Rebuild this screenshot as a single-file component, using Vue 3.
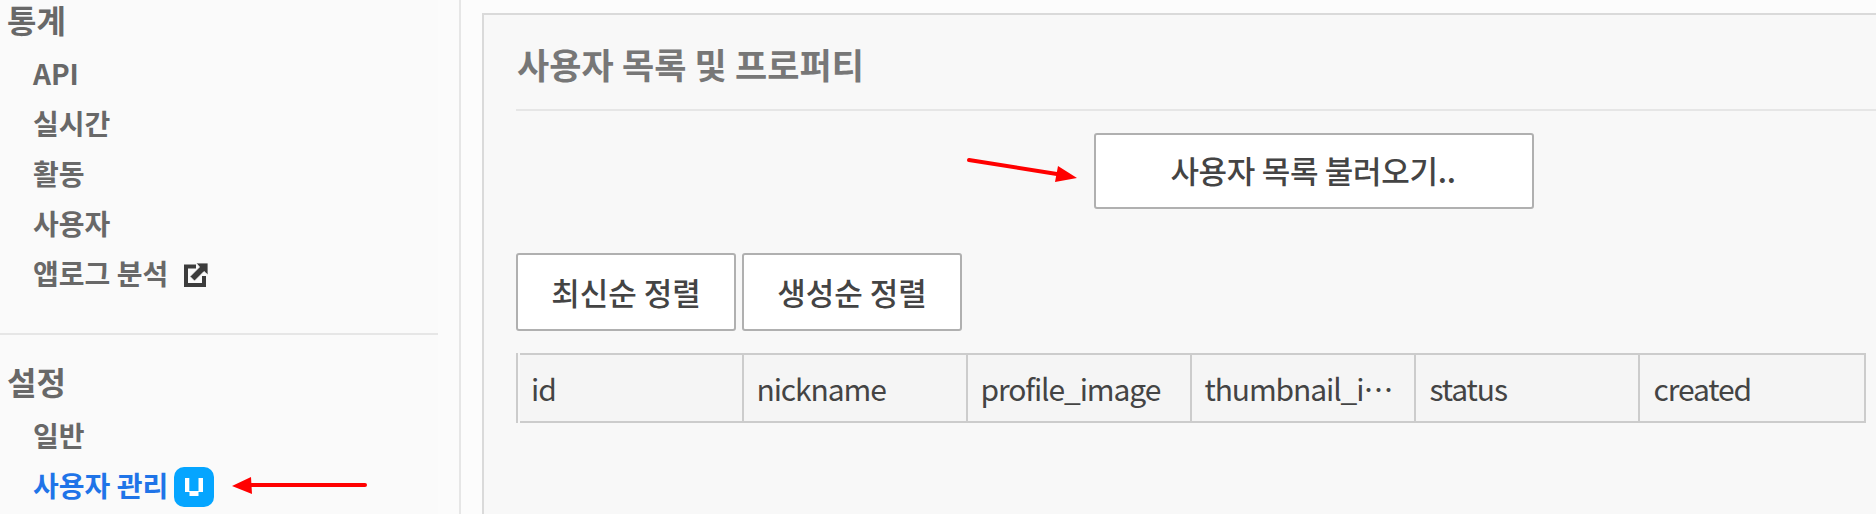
<script setup>
const stats = [
  { label: 'API' },
  { label: '실시간' },
  { label: '활동' },
  { label: '사용자' },
  { label: '앱로그 분석', external: true },
]
const settings = [
  { label: '일반' },
  { label: '사용자 관리', active: true },
]
const sorts = ['최신순 정렬', '생성순 정렬']
const columns = ['id', 'nickname', 'profile_image', 'thumbnail_i…', 'status', 'created']
</script>

<template>
  <div class="page">
    <aside class="sidebar">
      <nav class="menu">
        <h2>통계</h2>
        <ul>
          <li v-for="item in stats" :key="item.label">
            <span>{{ item.label }}</span>
            <svg v-if="item.external" class="external" viewBox="0 0 24 24">
              <path d="M12 3.500H2V22H20V13" fill="none" stroke="#3c3c3c" stroke-width="4" />
              <path d="M12 0H24V12L20 8.500L10.500 18L6 13.500L15.500 4Z" fill="#3c3c3c" stroke="#fafafa" stroke-width="0.800" />
            </svg>
          </li>
        </ul>
        <hr />
        <h2>설정</h2>
        <ul>
          <li v-for="item in settings" :key="item.label" :class="{ active: item.active }">
            <span>{{ item.label }}</span>
            <svg v-if="item.active" class="badge" viewBox="0 0 40 40">
              <rect width="40" height="40" rx="10" fill="#05a5ff" />
              <path d="M11 11H15.300V24H24.500V11H29V25H24.500V29H15.500V25H11Z" fill="#fff" />
            </svg>
          </li>
        </ul>
      </nav>
    </aside>

    <main class="content">
      <section class="panel">
        <h1>사용자 목록 및 프로퍼티</h1>
        <div class="load-row">
          <button class="load">사용자 목록 불러오기..</button>
        </div>
        <div class="sorts">
          <button v-for="s in sorts" :key="s">{{ s }}</button>
        </div>
        <div class="grid" lang="ko">
          <div v-for="c in columns" :key="c" class="cell"><span>{{ c }}</span></div>
        </div>
      </section>
    </main>

    <svg class="arrows" viewBox="0 0 1876 514">
      <g stroke="#f00" stroke-width="4" stroke-linecap="round">
        <line x1="969" y1="160" x2="1060" y2="174.500" />
        <line x1="250" y1="485" x2="365" y2="485" />
      </g>
      <path d="M1058 166L1077 178L1055 182Z M232 486L251 477L252 494Z" fill="#f00" />
    </svg>
  </div>
</template>

<style>
body {
  margin: 0;
}
</style>

<style scoped>
.page {
  position: relative;
  display: flex;
  width: 1876px;
  height: 514px;
  overflow: hidden;
  background: #fcfcfc;
  font-family: "Noto Sans CJK KR", sans-serif;
}
.sidebar {
  box-sizing: border-box;
  flex: 0 0 461px;
  border-right: 2px solid #e6e6e6;
  background: #fbfbfb;
}
.menu {
  width: 438px;
  height: 514px;
  background: #fafafa;
}
h1, h2, ul, hr {
  margin: 0;
  padding: 0;
}
h2 {
  height: 49px;
  padding-left: 7px;
  font-size: 32px;
  line-height: 38px;
  font-weight: 700;
  color: #686868;
}
ul {
  list-style: none;
}
li {
  display: flex;
  align-items: center;
  height: 50px;
  padding-left: 33px;
  font-size: 28px;
  line-height: 48px;
  font-weight: 700;
  color: #686868;
}
li span {
  padding-bottom: 2px;
}
li.active {
  color: #1f74e8;
}
.external {
  width: 24px;
  height: 24px;
  margin: 2px 0 0 16px;
}
.badge {
  width: 40px;
  height: 40px;
  margin: 2px 0 0 6px;
}
hr {
  height: 2px;
  margin: 34px 0 27px;
  border: 0;
  background: #e6e6e6;
}
.content {
  flex: 1;
  min-width: 0;
  padding: 13px 0 0 21px;
}
.panel {
  box-sizing: border-box;
  height: 520px;
  padding-left: 32px;
  border: 2px solid #dadada;
  border-width: 2px 0 0 2px;
  background: #f8f8f8;
}
h1 {
  height: 94px;
  padding-left: 1px;
  border-bottom: 2px solid #e6e6e6;
  font-size: 35px;
  line-height: 97px;
  letter-spacing: 0.1px;
  font-weight: 700;
  color: #777;
}
button {
  box-sizing: border-box;
  width: 220px;
  height: 78px;
  padding: 0;
  border: 2px solid #b0b0b0;
  border-radius: 3px;
  background: #fff;
  font-family: inherit;
  font-size: 31px;
  line-height: 74px;
  font-weight: 500;
  color: #444;
}
.load-row {
  padding: 22px 0 0 578px;
}
.load {
  display: block;
  width: 440px;
  height: 76px;
  padding: 0 2px 2px 0;
  line-height: 70px;
  letter-spacing: -0.3px;
}
.sorts {
  display: flex;
  gap: 6px;
  margin-top: 44px;
}
.grid {
  box-sizing: border-box;
  display: grid;
  grid-template-columns: 224px repeat(4, 224px) 226px;
  width: 1350px;
  height: 70px;
  margin-top: 22px;
  padding-left: 2px;
  border-left: 2px solid #ccc;
}
.cell {
  box-sizing: border-box;
  min-width: 0;
  padding: 0 0 0 12.500px;
  border: 2px solid #ccc;
  border-left: 0;
  background: #f5f5f5;
}
.cell:first-child {
  padding-left: 11px;
}
.cell:nth-child(n + 5) {
  padding-left: 13.500px;
}
.cell span {
  display: block;
  white-space: nowrap;
  font-size: 30px;
  line-height: 66px;
  letter-spacing: -1.1px;
  color: #444;
}
.arrows {
  position: absolute;
  inset: 0;
  width: 1876px;
  height: 514px;
  pointer-events: none;
}
</style>
